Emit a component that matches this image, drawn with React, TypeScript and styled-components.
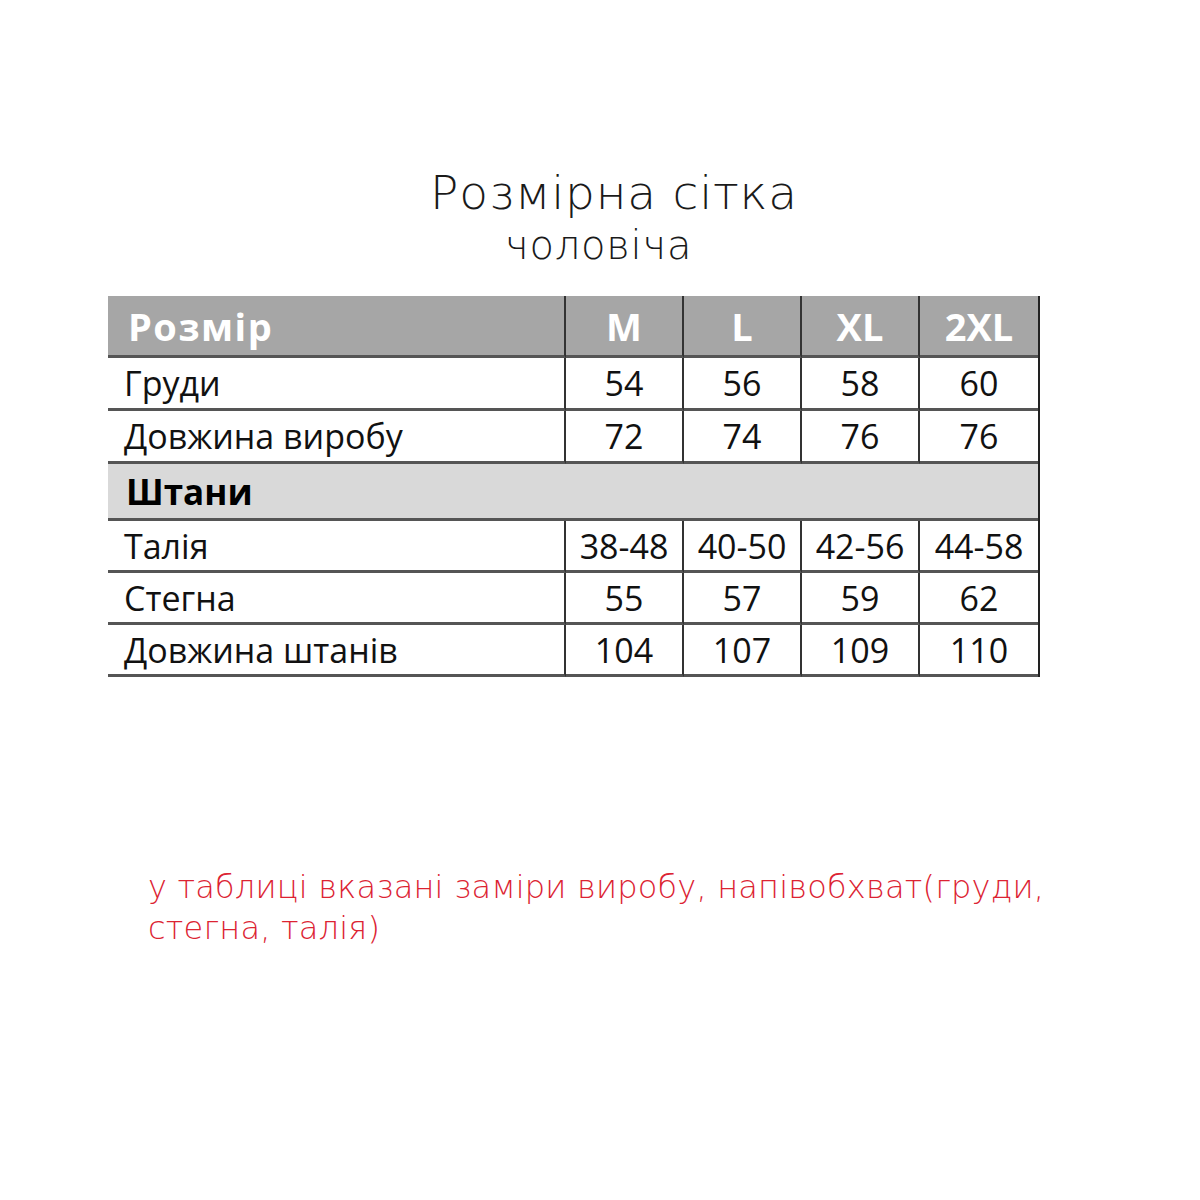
import React from "react";
import styled, { createGlobalStyle } from "styled-components";

const GlobalStyle = createGlobalStyle`
  html, body {
    margin: 0;
    padding: 0;
    background: #ffffff;
  }
`;

const Page = styled.div`
  width: 1200px;
  height: 1200px;
  box-sizing: border-box;
  padding-top: 164px;
  display: flex;
  flex-direction: column;
`;

const TitleBlock = styled.div`
  display: flex;
  flex-direction: column;
  font-family: "DejaVu Sans", sans-serif;
  font-weight: 200;
  color: #1a1a1a;
`;

const Title = styled.div`
  font-size: 47px;
  line-height: 58px;
  padding-left: 430px;
  letter-spacing: 0.8px;
`;

const Subtitle = styled.div`
  font-size: 40px;
  line-height: 46px;
  padding-left: 505px;
  letter-spacing: 0.8px;
`;

const Table = styled.div`
  margin: 28px 0 0 108px;
  width: 932px;
  display: grid;
  grid-template-columns: 458px repeat(4, 118px);
  border-right: 3px solid #222;
  box-sizing: border-box;
  font-family: "Open Sans", sans-serif;
  color: #111;
`;

const Cell = styled.div<{ $head?: boolean; $first?: boolean; $last?: boolean; $h: number }>`
  height: ${(p) => p.$h}px;
  box-sizing: border-box;
  display: flex;
  align-items: center;
  justify-content: ${(p) => (p.$first ? "flex-start" : "center")};
  padding-left: ${(p) => (p.$first ? (p.$head ? "20px" : "16px") : "0")};
  background: ${(p) => (p.$head ? "#a6a6a6" : "#ffffff")};
  color: ${(p) => (p.$head ? "#ffffff" : "#111111")};
  font-size: ${(p) => (p.$head ? "38px" : "34px")};
  font-weight: ${(p) => (p.$head ? 700 : 400)};
  letter-spacing: ${(p) => (p.$head && p.$first ? "1.5px" : "0")};
  border-bottom: 3px solid #555;
  border-right: ${(p) => (p.$last ? "none" : "2px solid #333")};
  white-space: nowrap;
`;

const Section = styled.div`
  grid-column: 1 / -1;
  height: 57px;
  box-sizing: border-box;
  display: flex;
  align-items: center;
  padding-left: 18px;
  background: #d9d9d9;
  font-size: 35px;
  font-weight: 700;
  color: #000;
  border-bottom: 3px solid #555;
`;

const Note = styled.div`
  margin: 190px 0 0 148px;
  font-family: "DejaVu Sans", sans-serif;
  font-weight: 200;
  font-size: 32px;
  line-height: 41px;
  letter-spacing: 0.2px;
  color: #dc2332;
`;

type Row = { label: string; values: string[] };

const top: Row[] = [
  { label: "Груди", values: ["54", "56", "58", "60"] },
  { label: "Довжина виробу", values: ["72", "74", "76", "76"] },
];

const pants: Row[] = [
  { label: "Талія", values: ["38-48", "40-50", "42-56", "44-58"] },
  { label: "Стегна", values: ["55", "57", "59", "62"] },
  { label: "Довжина штанів", values: ["104", "107", "109", "110"] },
];

const renderRow = (r: Row, h: number) => (
  <React.Fragment key={r.label}>
    <Cell $first $h={h}>
      {r.label}
    </Cell>
    {r.values.map((v, i) => (
      <Cell key={i} $h={h} $last={i === 3}>
        {v}
      </Cell>
    ))}
  </React.Fragment>
);

const App: React.FC = (): JSX.Element => {
  const sizes = ["M", "L", "XL", "2XL"];
  return (
    <Page>
      <GlobalStyle />
      <TitleBlock>
        <Title>Розмірна сітка</Title>
        <Subtitle>чоловіча</Subtitle>
      </TitleBlock>
      <Table>
        <Cell $head $first $h={62}>
          Розмір
        </Cell>
        {sizes.map((s, i) => (
          <Cell key={s} $head $h={62} $last={i === 3}>
            {s}
          </Cell>
        ))}
        {top.map((r) => renderRow(r, 53))}
        <Section>Штани</Section>
        {pants.map((r) => renderRow(r, 52))}
      </Table>
      <Note>
        у таблиці вказані заміри виробу, напівобхват(груди,
        <br />
        стегна, талія)
      </Note>
    </Page>
  );
};

export default App;
